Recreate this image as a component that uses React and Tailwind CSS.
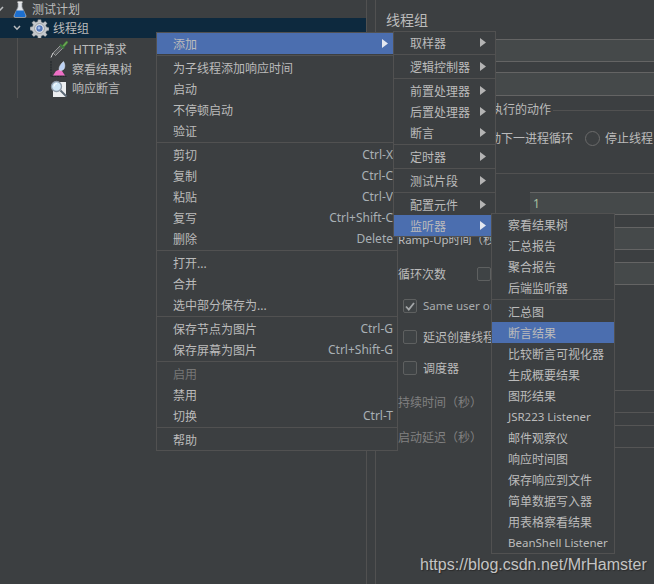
import React from "react";

const F = "[font-family:'Noto_Sans','Noto_Sans_CJK_SC',sans-serif]";

function Flask() {
  return (
    <svg width="14" height="17" viewBox="0 0 14 17" className="shrink-0">
      <path d="M5 1h4v5l4 8.5c.4 1-.2 2-1.300 2H2.300c-1.100 0-1.700-1-1.300-2L5 6z" fill="#dfe3e8" stroke="#8f959b" strokeWidth=".7" />
      <path d="M3.400 9.500h7.200l2 5c.3.900-.2 1.500-1 1.500H2.400c-.8 0-1.300-.6-1-1.500z" fill="#1c6fd0" />
      <rect x="4.500" y="0.500" width="5" height="1.300" fill="#f2f2f2" />
    </svg>
  );
}

function Gear() {
  return (
    <svg width="19" height="19" viewBox="0 0 19 19" className="shrink-0">
      <g fill="#c4c8cc" stroke="#5d6166" strokeWidth=".5">
        <path d="M8 .5h3l.4 2.400 1.800.8 2-1.400 2 2-1.400 2 .8 1.800 2.400.4v3l-2.400.4-.8 1.800 1.400 2-2 2-2-1.400-1.800.8-.4 2.400H8l-.4-2.400-1.800-.8-2 1.400-2-2 1.400-2-.8-1.800L0 11V8l2.400-.4.8-1.800-1.400-2 2-2 2 1.400 1.800-.8z" />
      </g>
      <circle cx="9.500" cy="9.500" r="4.800" fill="#e9edf2" stroke="#6f7378" strokeWidth=".6" />
      <circle cx="9.500" cy="9.500" r="3.200" fill="#5477b8" />
      <circle cx="9" cy="9" r="1.400" fill="#a9c1ea" />
    </svg>
  );
}

function Dropper() {
  return (
    <svg width="19" height="18" viewBox="0 0 19 18" className="shrink-0">
      <path d="M1 17.500 3 13" stroke="#d8d8d8" strokeWidth="1" />
      <path d="M3 13l8-8 2.500 2.500-8 8z" fill="#55585a" stroke="#b8b8b8" strokeWidth=".7" />
      <path d="M10 4.500l4 4" stroke="#3d7a3d" strokeWidth="2" />
      <path d="M12.500 5.500l3.500-4c1-.9 2.300.4 1.500 1.500l-3.500 4z" fill="#6aa84f" stroke="#3d7a3d" strokeWidth=".5" />
    </svg>
  );
}

function ChartIcon() {
  return (
    <svg width="17" height="18" viewBox="0 0 17 18" className="shrink-0">
      <path d="M1 1v15.500h15.500" fill="none" stroke="#24282c" strokeWidth="1.200" strokeDasharray="2 .7" />
      <path d="M3 15.500l3-4.500 3.500-1.500 2.500 1.500 3 4.500z" fill="#ee6fc5" />
      <path d="M9 9.500c0-3 2-6 4.500-8 1.500 2 1.800 5.500.5 7.500-1.200 1.500-3.800 2.200-5 .5z" fill="#bcd2f5" stroke="#e9eef8" strokeWidth=".5" />
    </svg>
  );
}

function Magnifier() {
  return (
    <svg width="18" height="18" viewBox="0 0 18 18" className="shrink-0">
      <rect x="3" y="2" width="13" height="15" fill="#eceef0" />
      <circle cx="6.500" cy="6.500" r="5" fill="#cfe6f6" stroke="#8d99a6" strokeWidth="1.300" />
      <path d="M4 6.500a3 3 0 0 1 3-3" stroke="#ffffff" strokeWidth="1" fill="none" />
      <path d="M10.500 10.500l6 6" stroke="#5b6875" strokeWidth="2" />
    </svg>
  );
}

function Chevron({ cls }) {
  return (
    <svg width="8" height="6" viewBox="0 0 8 6" className={cls}>
      <path d="M1 1l3 3.200L7 1" fill="none" stroke="#b9bcbf" strokeWidth="1.500" />
    </svg>
  );
}

function Arrow({ bright }) {
  return (
    <svg width="6" height="9" viewBox="0 0 6 9" className="shrink-0">
      <path d="M0 0l6 4.500L0 9z" fill={bright ? "#e4e8f0" : "#b4b4b4"} />
    </svg>
  );
}

function Item({ label, shortcut, active, arrow, disabled, small, arrowCls }) {
  return (
    <div className={`flex h-[21px] items-center pl-[16px] ${active ? "bg-[#4b6eaf]" : ""}`}>
      <span className={`whitespace-nowrap ${disabled ? "text-[#777777]" : "text-[#bbbbbb]"} ${small ? "text-[11.500px]" : "pt-[2px] text-[12px]"}`}>
        {label}
      </span>
      {shortcut && <span className="ml-auto whitespace-nowrap pr-[4px] pt-[1px] text-[12px] text-[#a9b0b5]">{shortcut}</span>}
      {arrow && (
        <span className={`ml-auto flex ${arrowCls}`}>
          <Arrow bright={active} />
        </span>
      )}
    </div>
  );
}

function Sep() {
  return <div className="h-[3px] pt-px"><div className="h-px bg-[#515151]" /></div>;
}

const mainMenu = [
  { label: "添加", active: true, arrow: true },
  "-",
  { label: "为子线程添加响应时间" },
  { label: "启动" },
  { label: "不停顿启动" },
  { label: "验证" },
  "-",
  { label: "剪切", shortcut: "Ctrl-X" },
  { label: "复制", shortcut: "Ctrl-C" },
  { label: "粘贴", shortcut: "Ctrl-V" },
  { label: "复写", shortcut: "Ctrl+Shift-C" },
  { label: "删除", shortcut: "Delete" },
  "-",
  { label: "打开..." },
  { label: "合并" },
  { label: "选中部分保存为..." },
  "-",
  { label: "保存节点为图片", shortcut: "Ctrl-G" },
  { label: "保存屏幕为图片", shortcut: "Ctrl+Shift-G" },
  "-",
  { label: "启用", disabled: true },
  { label: "禁用" },
  { label: "切换", shortcut: "Ctrl-T" },
  "-",
  { label: "帮助" },
];

const addMenu = [
  { label: "取样器", arrow: true },
  "-",
  { label: "逻辑控制器", arrow: true },
  "-",
  { label: "前置处理器", arrow: true },
  { label: "后置处理器", arrow: true },
  { label: "断言", arrow: true },
  "-",
  { label: "定时器", arrow: true },
  "-",
  { label: "测试片段", arrow: true },
  "-",
  { label: "配置元件", arrow: true },
  { label: "监听器", arrow: true, active: true },
];

const listenerMenu = [
  { label: "察看结果树" },
  { label: "汇总报告" },
  { label: "聚合报告" },
  { label: "后端监听器" },
  "-",
  { label: "汇总图" },
  { label: "断言结果", active: true },
  { label: "比较断言可视化器" },
  { label: "生成概要结果" },
  { label: "图形结果" },
  { label: "JSR223 Listener", small: true },
  { label: "邮件观察仪" },
  { label: "响应时间图" },
  { label: "保存响应到文件" },
  { label: "简单数据写入器" },
  { label: "用表格察看结果" },
  { label: "BeanShell Listener", small: true },
];

function Items({ items, arrowCls }) {
  return items.map((it, i) => (it === "-" ? <Sep key={i} /> : <Item key={i} {...it} arrowCls={arrowCls} />));
}

function TreeRow({ icon, label, cls }) {
  return (
    <div className={`flex items-center pl-[32px] ${cls}`}>
      {icon}
      <span className="whitespace-nowrap pt-px text-[12px] text-[#bbbbbb]">{label}</span>
    </div>
  );
}

function Check({ checked }) {
  return (
    <span className="flex h-[14px] w-[14px] shrink-0 items-center justify-center rounded-[2px] border border-[#5e6060] bg-[#3f4345]">
      {checked && (
        <svg width="10" height="9" viewBox="0 0 10 9">
          <path d="M1 4.500l2.800 3L9 1" fill="none" stroke="#a4a7a9" strokeWidth="1.800" />
        </svg>
      )}
    </span>
  );
}

function Field({ text, disabled, cls }) {
  return (
    <div className={`flex h-[23px] flex-1 items-center border-y pl-[3px] text-[12px] text-[#a8c0a0] ${disabled ? "border-[#555555] bg-[#3c3f41]" : "border-[#646464] bg-[#45494a]"} ${cls || ""}`}>
      {text}
    </div>
  );
}

export default function App() {
  return (
    <div className={`relative flex h-[584px] w-[654px] overflow-hidden bg-[#3c3f41] ${F}`}>
      {/* Tree */}
      <div className="w-[366px] shrink-0">
        <div className="flex h-[18px] items-center">
          <Chevron cls="-ml-[4px] mr-[9px] shrink-0" />
          <Flask />
          <span className="ml-[5px] pt-[2px] text-[12px] text-[#bbbbbb]">测试计划</span>
        </div>
        <div className="flex h-[20px] items-center bg-[#0d293e]">
          <Chevron cls="ml-[13px] mr-[9px] shrink-0" />
          <Gear />
          <span className="ml-[4px] pt-px text-[12px] text-[#bbbbbb]">线程组</span>
        </div>
        <div className="ml-[17px] h-[60px] border-l border-[#515151]">
          <TreeRow cls="h-[21px] gap-[4px] pt-px" icon={<Dropper />} label="HTTP请求" />
          <TreeRow cls="h-[20px] gap-[5px]" icon={<ChartIcon />} label="察看结果树" />
          <TreeRow cls="h-[19px] gap-[4px]" icon={<Magnifier />} label="响应断言" />
        </div>
      </div>

      {/* Splitter */}
      <div className="w-[10px] shrink-0 border-x border-[#515151]" />

      {/* Right panel */}
      <div className="min-w-0 flex-1 text-[12px] text-[#bbbbbb]">
        <div className="mt-[10px] h-[29px] pl-[10px] text-[14px] leading-[20px]">线程组</div>
        <Field cls="ml-[100px]" />
        <Field cls="ml-[100px] mt-[10px] h-[24px]" />
        <div className="mt-[4px] flex h-[20px] items-center pl-[19px]">
          <span className="whitespace-nowrap">在取样器错误后要执行的动作</span>
          <span className="ml-[2px] h-px flex-1 bg-[#515151]" />
        </div>
        <div className="mt-[8px] flex h-[20px] items-center pl-[101px]">
          <span className="shrink-0 whitespace-nowrap pt-px">启动下一进程循环</span>
          <span className="ml-[12px] h-[15px] w-[15px] shrink-0 rounded-full border border-[#6b6b6b] bg-[#3c3f41]" />
          <span className="ml-[5px] w-[48px] shrink-0 overflow-hidden whitespace-nowrap pt-px">停止线程</span>
        </div>
        <div className="ml-[22px] mt-[25px] h-px bg-[#515151]" />
        <div className="ml-[154px] mt-[18px]"><Field text="1" /></div>
        <div className="mt-[12px] flex h-[23px] items-center pl-[22px]">
          <span className="w-[132px] whitespace-nowrap pt-[3px] text-[11.500px]">Ramp-Up时间（秒）</span>
          <Field />
        </div>
        <div className="mt-[12px] flex h-[23px] items-center pl-[22px]">
          <span className="w-[79px] shrink-0 pt-[3px]">循环次数</span>
          <Check />
          <span className="ml-[4px] w-[35px] shrink-0">永远</span>
          <Field />
        </div>
        <div className="mt-[14px] flex h-[14px] items-center gap-[6px] pl-[27px]">
          <Check checked />
          <span className="whitespace-nowrap text-[11.500px] text-[#a8abad]">Same user on each iteration</span>
        </div>
        <div className="mt-[17px] flex h-[14px] items-center gap-[6px] pl-[27px]">
          <Check />
          <span className="whitespace-nowrap pt-px">延迟创建线程直到需要</span>
        </div>
        <div className="mt-[17px] flex h-[14px] items-center gap-[6px] pl-[27px]">
          <Check />
          <span className="pt-[2px]">调度器</span>
        </div>
        <div className="mt-[15px] flex h-[23px] items-center pl-[22px] text-[#808080]">
          <span className="w-[132px] whitespace-nowrap pt-[3px]">持续时间（秒）</span>
          <Field disabled />
        </div>
        <div className="mt-[12px] flex h-[23px] items-center pl-[22px] text-[#808080]">
          <span className="w-[132px] whitespace-nowrap pt-[3px]">启动延迟（秒）</span>
          <Field disabled />
        </div>
      </div>

      {/* Context menus */}
      <div className="absolute left-[156px] top-[32px] w-[242px] border border-[#515151] bg-[#3c3f41]">
        <Items items={mainMenu} arrowCls="pr-[9px]" />
      </div>
      <div className="absolute left-[393px] top-[31px] w-[103px] border border-[#515151] bg-[#3c3f41]">
        <Items items={addMenu} arrowCls="pr-[9px]" />
      </div>
      <div className="absolute left-[491px] top-[213px] w-[124px] border border-[#515151] bg-[#3c3f41]">
        <Items items={listenerMenu} />
      </div>

      {/* Watermark */}
      <div className="absolute left-[420px] top-[555px] whitespace-nowrap text-[16px] leading-[20px] text-[#c4c4c4] [font-family:'Liberation_Sans',sans-serif] [text-shadow:1px_1px_1px_#2a2a2a]">
        https://blog.csdn.net/MrHamster
      </div>
    </div>
  );
}
